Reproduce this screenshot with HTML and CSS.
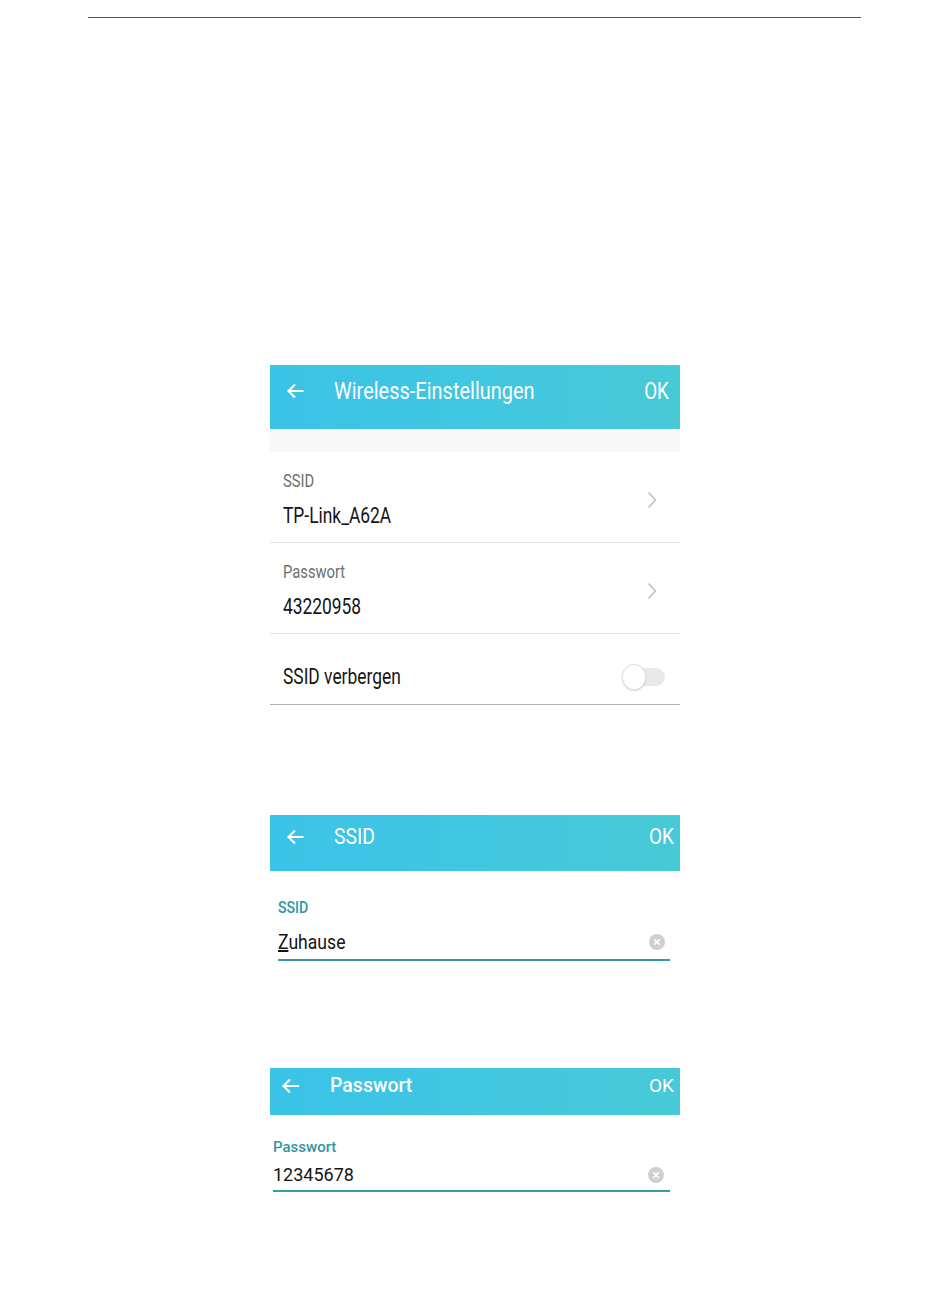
FILE: index.html
```html
<!DOCTYPE html>
<html lang="de">

<head>
    <meta charset="UTF-8">
    <meta name="viewport" content="width=device-width, initial-scale=1.0">
    <link rel="stylesheet" href="styles.css">
</head>

<body>
    <div class="Rule"></div>

    <!-- Wireless-Einstellungen -->
    <div class="Shot ShotMain">
        <div class="Bar BarMain">
            <svg class="Back" width="17" height="16" viewBox="0 0 17 16">
                <path d="M16.5 8H1.5M8 1.5L1.5 8L8 14.5" fill="none" stroke="#fff" stroke-width="2.1" />
            </svg>
            <span class="BarTitle Narrow">Wireless-Einstellungen</span>
            <span class="BarOk NarrowRight">OK</span>
        </div>
        <div class="Strip"></div>
        <div class="Row">
            <div class="RowText">
                <span class="RowLabel Narrow">SSID</span>
                <span class="RowValue Narrow">TP-Link_A62A</span>
            </div>
            <svg class="Chevron" width="10" height="18" viewBox="0 0 10 18">
                <path d="M1.5 1.5L8.5 9L1.5 16.5" fill="none" stroke="#bdbdbd" stroke-width="1.4" />
            </svg>
        </div>
        <div class="Row">
            <div class="RowText">
                <span class="RowLabel Narrow">Passwort</span>
                <span class="RowValue Narrow">43220958</span>
            </div>
            <svg class="Chevron" width="10" height="18" viewBox="0 0 10 18">
                <path d="M1.5 1.5L8.5 9L1.5 16.5" fill="none" stroke="#bdbdbd" stroke-width="1.4" />
            </svg>
        </div>
        <div class="Row RowSwitch">
            <span class="RowValue Narrow">SSID verbergen</span>
            <span class="Switch"><span class="Knob"></span></span>
        </div>
    </div>

    <!-- SSID -->
    <div class="Shot ShotSsid">
        <div class="Bar BarSsid">
            <svg class="Back" width="17" height="16" viewBox="0 0 17 16">
                <path d="M16.5 8H1.5M8 1.5L1.5 8L8 14.5" fill="none" stroke="#fff" stroke-width="2.1" />
            </svg>
            <span class="BarTitle Slim">SSID</span>
            <span class="BarOk SlimRight">OK</span>
        </div>
        <div class="Field FieldSsid">
            <span class="FieldLabel Slim">SSID</span>
            <div class="FieldInput">
                <span class="FieldValue Slim"><span class="Compose">Z</span>uhause</span>
                <span class="Clear">
                    <svg width="16" height="16" viewBox="0 0 16 16">
                        <circle cx="8" cy="8" r="8" fill="#cfcfcf" />
                        <path d="M5.3 5.3L10.7 10.7M10.7 5.3L5.3 10.7" stroke="#fff" stroke-width="1.7" />
                    </svg>
                </span>
            </div>
        </div>
    </div>

    <!-- Passwort -->
    <div class="Shot ShotPass">
        <div class="Bar BarPass">
            <svg class="Back" width="18" height="16" viewBox="0 0 18 16">
                <path d="M17 8H1.5M8 1.5L1.5 8L8 14.5" fill="none" stroke="#fff" stroke-width="2.1" />
            </svg>
            <span class="BarTitle">Passwort</span>
            <span class="BarOk">OK</span>
        </div>
        <div class="Field FieldPass">
            <span class="FieldLabel">Passwort</span>
            <div class="FieldInput">
                <span class="FieldValue">12345678</span>
                <span class="Clear">
                    <svg width="16" height="16" viewBox="0 0 16 16">
                        <circle cx="8" cy="8" r="8" fill="#cfcfcf" />
                        <path d="M5.3 5.3L10.7 10.7M10.7 5.3L5.3 10.7" stroke="#fff" stroke-width="1.7" />
                    </svg>
                </span>
            </div>
        </div>
    </div>
</body>

</html>
```

FILE: styles.css
```css
body {
    margin: 0;
    font-family: 'Roboto', 'Liberation Sans', sans-serif;
    background-color: #ffffff;
    color: #141414;
}

.Rule {
    margin: 17px 89px 0 88px;
    border-top: 1px solid #555555;
}

.Shot {
    width: 410px;
    margin: 0 auto;
    background: #ffffff;
}

.ShotMain {
    margin-top: 347px;
}

.ShotSsid {
    margin-top: 110px;
}

.ShotPass {
    margin-top: 107px;
}

/* condensed look */
.Narrow,
.NarrowRight,
.Slim,
.SlimRight {
    display: inline-block;
    white-space: nowrap;
    transform-origin: left center;
}

.Narrow {
    transform: scaleX(0.82);
}

.NarrowRight {
    transform: scaleX(0.8);
    transform-origin: right center;
}

.Slim {
    transform: scaleX(0.88);
}

.SlimRight {
    transform: scaleX(0.86);
    transform-origin: right center;
}

/* title bars */
.Bar {
    display: flex;
    align-items: center;
    background: linear-gradient(90deg, #3bc3e8 0%, #42c7df 60%, #48c9d6 100%);
    color: #ffffff;
    box-sizing: border-box;
}

.Back {
    flex: none;
    margin-right: 30px;
}

.BarTitle {
    flex: 1;
}

.BarMain {
    height: 64px;
    padding: 0 11px 12px 17px;
    font-size: 23.5px;
}

.BarMain .BarTitle {
    transform: scaleX(0.85);
}

.BarSsid {
    height: 56px;
    padding: 0 6px 13px 17px;
    font-size: 22px;
}

.BarPass {
    height: 47px;
    padding: 0 6px 12px 12px;
    font-size: 19.5px;
}

.BarPass .BarTitle {
    font-weight: 500;
}

.BarPass .BarOk {
    font-size: 19px;
}

/* settings list */
.Strip {
    height: 23px;
    background-color: #f8f8f8;
}

.Row {
    display: flex;
    align-items: center;
    padding: 18px 23px 13px 13px;
    border-bottom: 1px solid #e2e2e2;
}

.RowText {
    flex: 1;
    display: flex;
    flex-direction: column;
    align-items: flex-start;
    gap: 11px;
}

.RowLabel {
    font-size: 18px;
    line-height: 22px;
    color: #6f6f6f;
}

.RowValue {
    font-size: 22px;
    line-height: 26px;
    color: #141414;
    transform: scaleX(0.79);
}

.RowSwitch {
    justify-content: space-between;
    padding: 30px 15px 14px 13px;
    border-bottom-color: #b3b3b3;
}

.Switch {
    position: relative;
    width: 35px;
    height: 18px;
    border-radius: 9px;
    background-color: #e9e9e9;
    margin-left: 7px;
}

.Knob {
    position: absolute;
    left: -8px;
    top: -4px;
    width: 24px;
    height: 26px;
    border-radius: 50%;
    background: #ffffff;
    border: 1px solid #e0e0e0;
    box-sizing: border-box;
    box-shadow: 0 1px 2px rgba(0, 0, 0, 0.15);
}

/* edit fields */
.Field {
    display: flex;
    flex-direction: column;
    align-items: flex-start;
}

.FieldInput {
    align-self: stretch;
    display: flex;
    align-items: center;
    justify-content: space-between;
    border-bottom: 2px solid #389ca6;
}

.FieldLabel {
    color: #2f96a3;
    font-weight: 500;
}

.FieldValue {
    color: #141414;
}

.Compose {
    text-decoration: underline;
}

.Clear {
    display: flex;
}

.FieldSsid {
    padding: 27px 10px 0 8px;
    gap: 12px;
}

.FieldSsid .FieldLabel {
    font-size: 16px;
    line-height: 20px;
}

.FieldSsid .FieldValue {
    font-size: 20px;
    line-height: 24px;
}

.FieldSsid .FieldInput {
    padding: 0 5px 5px 0;
}

.FieldPass {
    padding: 23px 10px 0 3px;
    gap: 8px;
}

.FieldPass .FieldLabel {
    font-size: 15px;
    line-height: 18px;
}

.FieldPass .FieldValue {
    font-size: 18px;
    line-height: 22px;
}

.FieldPass .FieldInput {
    padding: 0 6px 4px 0;
}
```
